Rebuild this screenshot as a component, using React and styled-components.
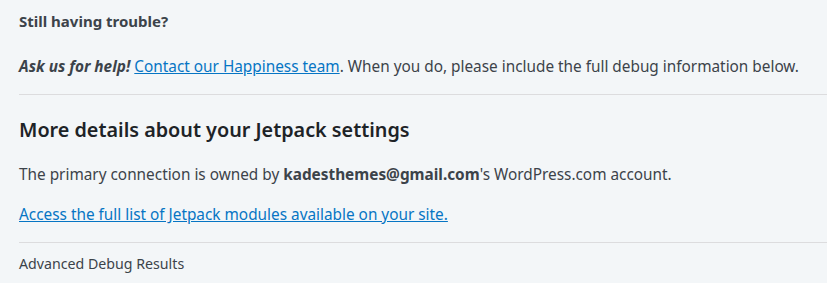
import React from 'react';
import styled, { createGlobalStyle } from 'styled-components';

const GlobalStyle = createGlobalStyle`
  body {
    margin: 0;
    background: #f3f6f8;
    font-family: "Noto Sans", "Open Sans", sans-serif;
    color: #3c434a;
  }
`;

const Page = styled.div`
  padding: 0 0 0 19px;
  overflow: hidden;
`;

const Section = styled.div`
  padding: ${props => props.pad || '0'};
  border-bottom: ${props => (props.divider ? '1px solid #dcdcde' : 'none')};
  margin-right: -20px;
`;

const Subhead = styled.h4`
  margin: 0;
  padding-top: 11px;
  font-size: 15px;
  font-weight: 700;
  line-height: 20px;
`;

const Text = styled.p`
  margin: ${props => props.margin || '0'};
  font-size: 15.35px;
  line-height: 22px;
`;

const Heading = styled.h3`
  margin: 0;
  font-size: 19.8px;
  font-weight: 600;
  line-height: 28px;
  color: #1d2327;
`;

const Link = styled.a`
  color: #0675c4;
  text-decoration: underline;
`;

const Footer = styled.div`
  padding: 11px 0 10px;
  font-size: 14.2px;
  line-height: 20px;
  color: #3c434a;
`;

export default function App() {
  return (
    <>
      <GlobalStyle />
      <Page>
        <Section divider pad="0 0 17px">
          <Subhead>Still having trouble?</Subhead>
          <Text margin="24px 0 0">
            <strong><em>Ask us for help!</em></strong>{' '}
            <Link href="#">Contact our Happiness team</Link>. When you do, please include the full debug information below.
          </Text>
        </Section>
        <Section divider pad="21px 0 17px">
          <Heading>More details about your Jetpack settings</Heading>
          <Text margin="19px 0 0">
            The primary connection is owned by <strong>kadesthemes@gmail.com</strong>'s WordPress.com account.
          </Text>
          <Text margin="18px 0 0">
            <Link href="#">Access the full list of Jetpack modules available on your site.</Link>
          </Text>
        </Section>
        <Footer>Advanced Debug Results</Footer>
      </Page>
    </>
  );
}
